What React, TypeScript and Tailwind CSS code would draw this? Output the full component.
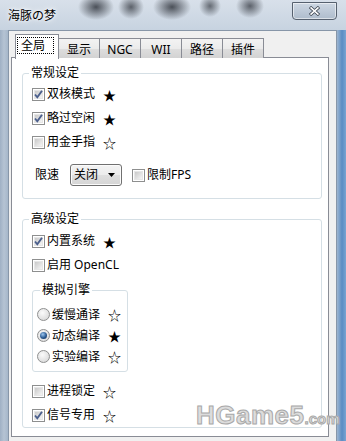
import React from 'react';

const cjk = "font-['Noto_Sans','Noto_Sans_CJK_SC',sans-serif]";

function Check({ checked }: { checked?: boolean }) {
  return (
    <span className="relative block w-[13px] h-[13px] shrink-0 border border-[#8e8f8f] bg-white p-px">
      <span className="block w-full h-full border border-[#e6e6e6] bg-[linear-gradient(135deg,#c9c9c9,#f5f5f5)]" />
      {checked && (
        <svg className="absolute left-0 top-0" width="11" height="11" viewBox="0 0 11 11">
          <path d="M2 5.5 L4.3 8.3 L9 1.8" fill="none" stroke="#4b5f8c" strokeWidth="1.9" />
        </svg>
      )}
    </span>
  );
}

function Radio({ on }: { on?: boolean }) {
  return (
    <span className="flex w-[13px] h-[13px] shrink-0 items-center justify-center rounded-full border border-[#8e8f8f] bg-[radial-gradient(circle_at_40%_35%,#fbfbfb,#d2d2d2)]">
      {on && <span className="block w-[7px] h-[7px] rounded-full bg-[radial-gradient(circle_at_40%_35%,#9cc6ef,#2a5a92_55%,#10284d)]" />}
    </span>
  );
}

function Star({ full }: { full?: boolean }) {
  return <span className="ml-[8px] font-['Noto_Sans_CJK_SC',sans-serif] text-[13px] leading-[13px]">{full ? '★' : '☆'}</span>;
}

function CheckRow({ label, checked, star }: { label: string; checked?: boolean; star?: boolean }) {
  return (
    <div className="flex h-[24px] items-center">
      <Check checked={checked} />
      <span className="ml-[2px] leading-[12px]">{label}</span>
      <Star full={star} />
    </div>
  );
}

function RadioRow({ label, on, star }: { label: string; on?: boolean; star?: boolean }) {
  return (
    <div className="flex h-[21px] items-center">
      <Radio on={on} />
      <span className="ml-[2px] leading-[12px]">{label}</span>
      <Star full={star} />
    </div>
  );
}

const tabs = ['显示', 'NGC', 'WII', '路径', '插件'];

export default function App() {
  return (
    <div className={`relative flex h-[441px] w-[346px] flex-col overflow-hidden text-[12px] text-black ${cjk} bg-[linear-gradient(90deg,#9fb0c4_0px,#b5c3d3_4px,#a6b7ca_8px,#c9d5e2_50%,#9db5d0_337px,#5b8cc3_342px,#7aa4d2_346px)]`}>
      {/* title bar */}
      <div className="flex h-[30px] shrink-0 justify-between bg-[radial-gradient(ellipse_18px_13px_at_96px_7px,rgba(40,44,52,0.8),transparent),radial-gradient(ellipse_13px_12px_at_131px_7px,rgba(40,44,52,0.7),transparent),radial-gradient(ellipse_19px_13px_at_172px_7px,rgba(40,44,52,0.8),transparent),radial-gradient(ellipse_11px_11px_at_210px_6px,rgba(40,44,52,0.65),transparent),radial-gradient(ellipse_14px_12px_at_250px_6px,rgba(40,44,52,0.7),transparent),linear-gradient(#d8e0ea,#c7d3e0)]">
        <span className="pl-[8px] pt-[9px] leading-[14px] [text-shadow:0_0_6px_#ffffff,0_0_3px_#ffffff]">海豚の梦</span>
        <div className="mr-[9px] mt-[2px] flex h-[18px] w-[45px] items-start justify-center rounded-b-[4px] border border-[#56616f] bg-[linear-gradient(#cdd7e3,#aebccc)] shadow-[inset_0_0_0_1px_rgba(255,255,255,0.55)]">
          <svg className="mt-[3px]" width="11" height="10" viewBox="0 0 11 10">
            <path d="M1 1 L10 9 M10 1 L1 9" stroke="#3b4450" strokeWidth="3.2" />
            <path d="M1.5 1.3 L9.5 8.7 M9.5 1.3 L1.5 8.7" stroke="#ffffff" strokeWidth="1.6" />
          </svg>
        </div>
      </div>

      {/* client area */}
      <div className="ml-[8px] mr-[9px] flex-1 border-l border-r border-t border-[#8796a8] bg-[#f0f0f0] pl-[2px] pr-[7px] pt-[3px]">
        <div className="relative z-10 flex h-[24px] items-end pl-[4px]">
          <div className="relative z-10 -mb-px flex h-[25px] w-[44px] items-start border border-b-0 border-[#898c95] bg-white pl-[1px] pt-[2px]">
            <span className="border border-dotted border-black pl-[3px] pr-[8px] pt-px leading-[14px]">全局</span>
          </div>
          {tabs.map((t) => (
            <div
              key={t}
              className="-ml-px flex h-[20px] w-[42px] items-center justify-center border border-b-0 border-[#898c95] bg-[linear-gradient(#f3f3f3_0%,#ebebeb_50%,#dedede_50%,#d3d3d3_100%)] pt-[2px] leading-[14px]"
            >
              {t}
            </div>
          ))}
        </div>

        <div className="-mt-px border border-[#898c95] bg-white pb-[8px] pl-[10px] pr-[6px] pt-[9px]">
          <fieldset className="rounded-[3px] border border-[#d5dfe5] pb-[12px]">
            <legend className="ml-[6px] px-[2px] leading-[12px]">常规设定</legend>
            <div className="pl-[9px] pt-[3px]">
              <CheckRow label="双核模式" checked star />
              <CheckRow label="略过空闲" checked star />
              <CheckRow label="用金手指" />
              <div className="mt-[10px] flex h-[22px] items-center">
                <span className="pl-[3px] leading-[12px]">限速</span>
                <div className="ml-[11px] flex h-[22px] w-[52px] items-center justify-between rounded-[3px] border border-[#707070] bg-[linear-gradient(#f3f3f3_0%,#ececec_50%,#dfdfdf_50%,#d5d5d5_100%)] pl-[3px] pr-[6px] shadow-[inset_0_0_0_1px_#fbfbfb]">
                  <span className="leading-[12px]">关闭</span>
                  <svg width="7" height="4" viewBox="0 0 7 4">
                    <path d="M0 0 H7 L3.5 4 Z" fill="#000" />
                  </svg>
                </div>
                <span className="ml-[10px]">
                  <Check />
                </span>
                <span className="ml-[2px] leading-[12px]">限制FPS</span>
              </div>
            </div>
          </fieldset>

          <fieldset className="mt-[14px] rounded-[3px] border border-[#d5dfe5]">
            <legend className="ml-[6px] px-[2px] leading-[12px]">高级设定</legend>
            <div className="pl-[9px] pt-[4px]">
              <CheckRow label="内置系统" checked star />
              <div className="flex h-[24px] items-center">
                <Check />
                <span className="ml-[2px] leading-[12px]">启用 OpenCL</span>
              </div>
              <fieldset className="mt-[7px] w-[96px] rounded-[3px] border border-[#d5dfe5] pb-[4px]">
                <legend className="ml-[7px] px-[2px] leading-[12px]">模拟引擎</legend>
                <div className="pl-[4px] pt-[8px]">
                  <RadioRow label="缓慢通译" />
                  <RadioRow label="动态编译" on star />
                  <RadioRow label="实验编译" />
                </div>
              </fieldset>
              <div className="mt-[7px]">
                <CheckRow label="进程锁定" />
                <CheckRow label="信号专用" checked />
              </div>
            </div>
          </fieldset>
        </div>
      </div>

      {/* watermark */}
      <div className="pointer-events-none absolute left-[196px] top-[400px] flex items-baseline font-['Liberation_Sans',sans-serif] font-bold text-[#dcdcdc] [-webkit-text-stroke:1px_#a9a9a9]">
        <span className="text-[26px] leading-[30px] tracking-[0.5px]">HGame5</span>
        <span className="text-[15px] leading-[30px]">.com</span>
      </div>
    </div>
  );
}
